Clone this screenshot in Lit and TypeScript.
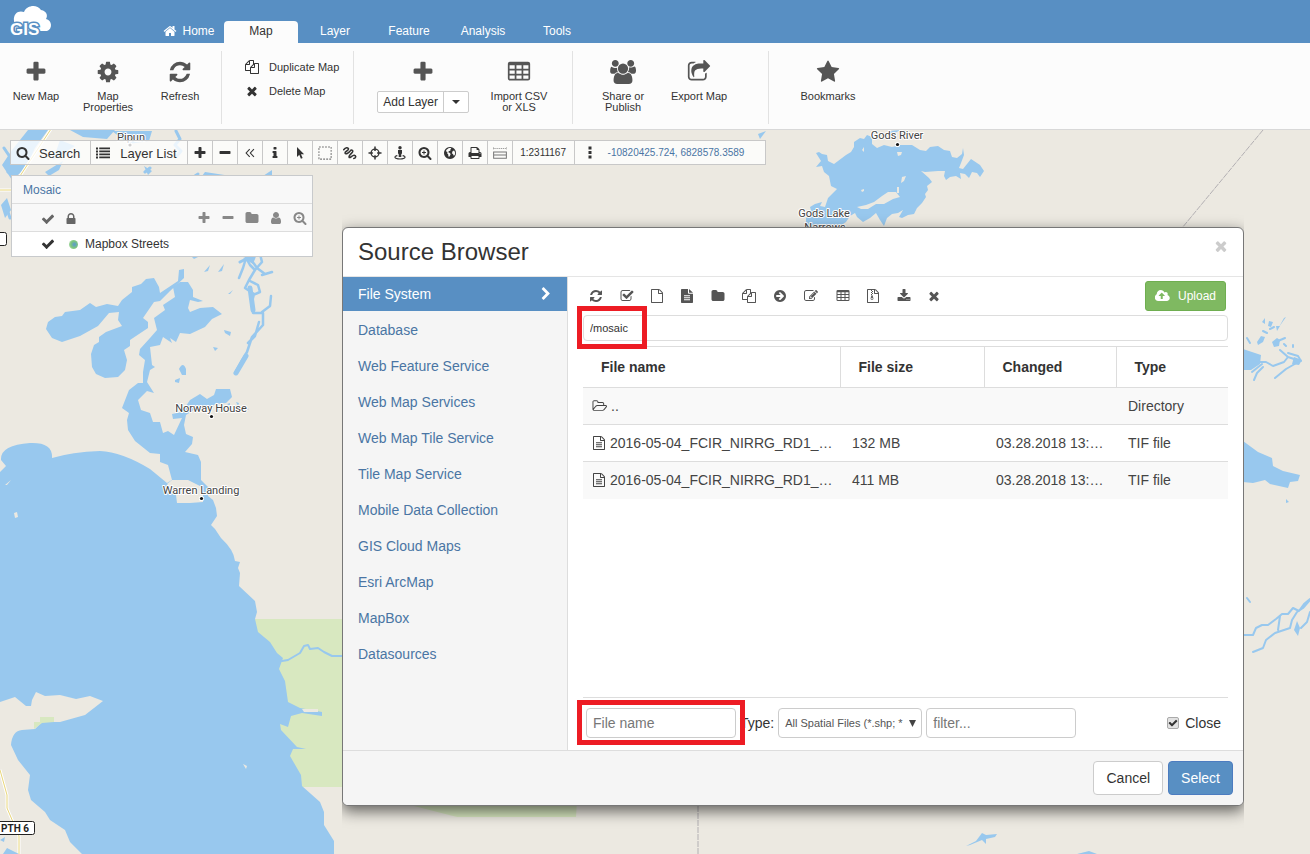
import { LitElement, html, svg, css, nothing } from "lit";
import { customElement, state } from "lit/decorators.js";
import { classMap } from "lit/directives/class-map.js";

const FILE =
  "M1596 380q28 28 48 76t20 88v1152q0 40-28 68t-68 28h-1344q-40 0-68-28t-28-68v-1600q0-40 28-68t68-28h896q40 0 88 20t76 48zm-444-244v376h376q-10-29-22-41l-313-313q-12-12-41-22zm384 1528v-1024h-416q-40 0-68-28t-28-68v-416h-768v1536h1280z";
const MAGNIFIER =
  "M1216 832q0-185-131.5-316.5t-316.5-131.5-316.5 131.5-131.5 316.5 131.5 316.5 316.5 131.5 316.5-131.5 131.5-316.5zm512 832q0 52-38 90t-90 38q-54 0-90-38l-343-342q-179 124-399 124-143 0-273.5-55.5t-225-150-150-225-55.5-273.5 55.5-273.5 150-225 225-150 273.5-55.5 273.5 55.5 225 150 150 225 55.5 273.5q0 220-124 399l343 343q37 37 37 90z";

const PATHS: Record<string, string> = {
  plus: "M1600 736v192q0 40-28 68t-68 28h-416v416q0 40-28 68t-68 28h-192q-40 0-68-28t-28-68v-416h-416q-40 0-68-28t-28-68v-192q0-40 28-68t68-28h416v-416q0-40 28-68t68-28h192q40 0 68 28t28 68v416h416q40 0 68 28t28 68z",
  minus: "M1600 736v192q0 40-28 68t-68 28h-1216q-40 0-68-28t-28-68v-192q0-40 28-68t68-28h1216q40 0 68 28t28 68z",
  cog: "M1152 896q0-106-75-181t-181-75-181 75-75 181 75 181 181 75 181-75 75-181zm512-109v222q0 12-8 23t-20 13l-185 28q-19 54-39 91 35 50 107 138 10 12 10 25t-9 23q-27 37-99 108t-94 71q-12 0-26-9l-138-108q-44 23-91 38-16 136-29 186-7 28-36 28h-222q-14 0-24.5-8.5t-11.5-21.5l-28-184q-49-16-90-37l-141 107q-10 9-25 9-14 0-25-11-126-114-165-168-7-10-7-23 0-12 8-23 15-21 51-66.5t54-70.5q-27-50-41-99l-183-27q-13-2-21-12.5t-8-23.5v-222q0-12 8-23t19-13l186-28q14-46 39-92-40-57-107-138-10-12-10-24 0-10 9-23 26-36 98.5-107.5t94.5-71.5q13 0 26 10l138 107q44-23 91-38 16-136 29-186 7-28 36-28h222q14 0 24.5 8.5t11.5 21.5l28 184q49 16 90 37l142-107q9-9 24-9 13 0 25 10 129 119 165 170 7 8 7 22 0 12-8 23-15 21-51 66.5t-54 70.5q26 50 41 98l183 28q13 2 21 12.5t8 23.5z",
  refresh: "M1639 1056q0 5-1 7-64 268-268 434.5t-478 166.5q-146 0-282.5-55t-243.5-157l-129 129q-19 19-45 19t-45-19-19-45v-448q0-26 19-45t45-19h448q26 0 45 19t19 45-19 45l-137 137q71 66 161 102t187 36q134 0 250-65t186-179q11-17 53-117 8-23 30-23h192q13 0 22.5 9.5t9.5 22.5zm25-800v448q0 26-19 45t-45 19h-448q-26 0-45-19t-19-45 19-45l138-138q-148-137-349-137-134 0-250 65t-186 179q-11 17-53 117-8 23-30 23h-199q-13 0-22.5-9.5t-9.5-22.5v-7q65-268 270-434.5t480-166.5q146 0 284 55.5t245 156.5l130-129q19-19 45-19t45 19 19 45z",
  star: "M1728 647q0 22-26 48l-363 354 86 500q1 7 1 20 0 21-10.5 35.5t-30.5 14.5q-19 0-40-12l-449-236-449 236q-22 12-40 12-21 0-31.5-14.5t-10.5-35.5q0-6 2-20l86-500-364-354q-25-27-25-48 0-37 56-46l502-73 225-455q19-41 49-41t49 41l225 455 502 73q56 9 56 46z",
  search: MAGNIFIER,
  home: "M1472 992v480q0 26-19 45t-45 19h-384v-384h-256v384h-384q-26 0-45-19t-19-45v-480q0-1 .5-3t.5-3l575-474 575 474q1 2 1 6zm223-69l-62 74q-8 9-21 11h-3q-13 0-21-7l-692-577-692 577q-12 8-24 7-13-2-21-11l-62-74q-8-10-7-23.5t11-21.5l719-599q32-26 76-26t76 26l244 204v-195q0-14 9-23t23-9h192q14 0 23 9t9 23v408l219 182q10 8 11 21.5t-7 23.5z",
  times: "M1490 1322q0 40-28 68l-136 136q-28 28-68 28t-68-28l-294-294-294 294q-28 28-68 28t-68-28l-136-136q-28-28-28-68t28-68l294-294-294-294q-28-28-28-68t28-68l136-136q28-28 68-28t68 28l294 294 294-294q28-28 68-28t68 28l136 136q28 28 28 68t-28 68l-294 294 294 294q28 28 28 68z",
  check: "M1671 566q0 40-28 68l-724 724-136 136q-28 28-68 28t-68-28l-136-136-362-362q-28-28-28-68t28-68l136-136q28-28 68-28t68 28l294 295 656-657q28-28 68-28t68 28l136 136q28 28 28 68z",
  chevron: "M1363 877l-742 742q-19 19-45 19t-45-19l-166-166q-19-19-19-45t19-45l531-531-531-531q-19-19-19-45t19-45l166-166q19-19 45-19t45 19l742 742q19 19 19 45t-19 45z",
  folder: "M1728 608v704q0 92-66 158t-158 66h-1216q-92 0-158-66t-66-158v-960q0-92 66-158t158-66h320q92 0 158 66t66 158v32h672q92 0 158 66t66 158z",
  user: "M1536 1399q0 109-62.5 187t-150.5 78h-854q-88 0-150.5-78t-62.5-187q0-85 8.5-160.5t31.5-152 58.5-131 94-89 134.5-34.5q131 128 313 128t313-128q76 0 134.5 34.5t94 89 58.5 131 31.5 152 8.5 160.5zm-256-887q0 159-112.5 271.5t-271.5 112.5-271.5-112.5-112.5-271.5 112.5-271.5 271.5-112.5 271.5 112.5 112.5 271.5z",
  lock: "M640 768h512v-192q0-106-75-181t-181-75-181 75-75 181v192zm832 96v576q0 40-28 68t-68 28h-960q-40 0-68-28t-28-68v-576q0-40 28-68t68-28h32v-192q0-184 132-316t316-132 316 132 132 316v192h32q40 0 68 28t28 68z",
  print: "M448 1536h896v-256h-896v256zm0-640h896v-384h-160q-40 0-68-28t-28-68v-160h-640v640zm1152 64q0-26-19-45t-45-19-45 19-19 45 19 45 45 19 45-19 19-45zm128 0v416q0 13-9.5 22.5t-22.5 9.5h-224v160q0 40-28 68t-68 28h-960q-40 0-68-28t-28-68v-160h-224q-13 0-22.5-9.5t-9.5-22.5v-416q0-79 56.5-135.5t135.5-56.5h64v-544q0-40 28-68t68-28h672q40 0 88 20t76 48l152 152q28 28 48 76t20 88v256h64q79 0 135.5 56.5t56.5 135.5z",
  file: FILE,
  files: "M1696 384q40 0 68 28t28 68v1216q0 40-28 68t-68 28h-960q-40 0-68-28t-28-68v-288h-544q-40 0-68-28t-28-68v-672q0-40 20-88t48-76l408-408q28-28 76-48t88-20h416q40 0 68 28t28 68v328q68-40 128-40h416zm-544 213l-299 299h299v-299zm-640-384l-299 299h299v-299zm196 647l316-316v-416h-384v416q0 40-28 68t-68 28h-416v640h512v-256q0-40 20-88t48-76zm956 804v-1152h-384v416q0 40-28 68t-68 28h-416v640h896z",
  download: "M1344 1344q0-26-19-45t-45-19-45 19-19 45 19 45 45 19 45-19 19-45zm256 0q0-26-19-45t-45-19-45 19-19 45 19 45 45 19 45-19 19-45zm128-224v320q0 40-28 68t-68 28h-1472q-40 0-68-28t-28-68v-320q0-40 28-68t68-28h465l135 136q58 56 136 56t136-56l136-136h464q40 0 68 28t28 68zm-325-569q17 41-14 70l-448 448q-18 19-45 19t-45-19l-448-448q-31-29-14-70 17-39 59-39h256v-448q0-26 19-45t45-19h256q26 0 45 19t19 45v448h256q42 0 59 39z",
  edit: "M888 1184l116-116-152-152-116 116v56h96v96h56zm440-720q-16-16-33 1l-350 350q-17 17-1 33t33-1l350-350q17-17 1-33zm80 594v190q0 119-84.5 203.5t-203.5 84.5h-832q-119 0-203.5-84.5t-84.5-203.5v-832q0-119 84.5-203.5t203.5-84.5h832q63 0 117 25 15 7 18 23 3 17-9 29l-49 49q-14 14-32 8-23-6-45-6h-832q-66 0-113 47t-47 113v832q0 66 47 113t113 47h832q66 0 113-47t47-113v-126q0-13 9-22l64-64q15-15 35-7t20 29zm-96-738l288 288-672 672h-288v-288zm444 132l-92 92-288-288 92-92q28-28 68-28t68 28l152 152q28 28 28 68t-28 68z",
  checksq: "M1472 930v318q0 119-84.5 203.5t-203.5 84.5h-832q-119 0-203.5-84.5t-84.5-203.5v-832q0-119 84.5-203.5t203.5-84.5h832q63 0 117 25 15 7 18 23 3 17-9 29l-49 49q-10 10-23 10-3 0-9-2-23-6-45-6h-832q-66 0-113 47t-47 113v832q0 66 47 113t113 47h832q66 0 113-47t47-113v-254q0-13 9-22l64-64q10-10 23-10 6 0 12 3 20 8 20 29zm231-489l-814 814q-24 24-57 24t-57-24l-430-430q-24-24-24-57t24-57l110-110q24-24 57-24t57 24l263 263 647-647q24-24 57-24t57 24l110 110q24 24 24 57t-24 57z",
  share: "M1472 989v259q0 119-84.5 203.5t-203.5 84.5h-832q-119 0-203.5-84.5t-84.5-203.5v-832q0-119 84.5-203.5t203.5-84.5h255q13 0 22.5 9.5t9.5 22.5q0 27-26 32-77 26-133 60-10 4-16 4h-112q-66 0-113 47t-47 113v832q0 66 47 113t113 47h832q66 0 113-47t47-113v-214q0-19 18-29 28-13 54-37 16-16 35-8 21 9 21 29zm237-496l-384 384q-18 19-45 19-12 0-25-5-39-17-39-59v-192h-160q-323 0-438 131-119 137-74 473 3 23-20 34-8 2-12 2-16 0-26-13-10-14-21-31t-39.5-68.5-49.5-99.5-38.5-114-17.5-122q0-49 3.5-91t14-90 28-88 47-81.5 68.5-74 94.5-61.5 124.5-48.5 159.5-30.5 196.5-11h160v-192q0-42 39-59 13-5 25-5 26 0 45 19l384 384q19 19 19 45t-19 45z",
  info: "M1216 1344v128q0 26-19 45t-45 19h-512q-26 0-45-19t-19-45v-128q0-26 19-45t45-19h64v-384h-64q-26 0-45-19t-19-45v-128q0-26 19-45t45-19h384q26 0 45 19t19 45v576h64q26 0 45 19t19 45zm-128-1152v192q0 26-19 45t-45 19h-256q-26 0-45-19t-19-45v-192q0-26 19-45t45-19h256q26 0 45 19t19 45z",
  folderopen: "M1845 931q0-35-53-35h-1088q-40 0-85.5 21.5t-71.5 52.5l-294 363q-18 24-18 40 0 35 53 35h1088q40 0 86-22t71-53l294-363q18-22 18-39zm-1141-163h768v-160q0-40-28-68t-68-28h-576q-40 0-68-28t-28-68v-64q0-40-28-68t-68-28h-320q-40 0-68 28t-28 68v853l256-315q44-53 116-87.5t140-34.5zm1269 163q0 62-46 120l-295 363q-43 53-116 87.5t-140 34.5h-1088q-92 0-158-66t-66-158v-960q0-92 66-158t158-66h320q92 0 158 66t66 158v32h544q92 0 158 66t66 158v160h192q54 0 99 24.5t67 70.5q15 32 15 68z",
  upload: "M1216 864q0-14-9-23l-352-352q-9-9-23-9t-23 9l-351 351q-10 12-10 24 0 14 9 23t23 9h224v352q0 13 9.5 22.5t22.5 9.5h192q13 0 22.5-9.5t9.5-22.5v-352h224q13 0 22.5-9.5t9.5-22.5zm640 288q0 159-112.5 271.5t-271.5 112.5h-1088q-185 0-316.5-131.5t-131.5-316.5q0-130 70-240t188-165q-2-30-2-43 0-212 150-362t362-150q156 0 285.5 87t188.5 231q71-62 166-62 106 0 181 75t75 181q0 76-41 138 130 31 213.5 135.5t83.5 238.5z",
  users: "M593 896q-162 5-265 128h-134q-82 0-138-40.5t-56-118.5q0-353 124-353 6 0 43.5 21t97.5 42.5 119 21.5q67 0 133-23-5 37-5 66 0 159 93 292zm1071 637q0 120-73 189.5t-194 69.5h-874q-121 0-194-69.5t-73-189.5q0-53 3.5-103.5t14-109 26.5-108.5 43-97.5 62-81 85.5-53.5 111.5-20q10 0 43 21.5t73 48 107 48 135 21.5 135-21.5 107-48 73-48 43-21.5q61 0 111.5 20t85.5 53.5 62 81 43 97.5 26.5 108.5 14 109 3.5 103.5zm-1024-1277q0 106-75 181t-181 75-181-75-75-181 75-181 181-75 181 75 75 181zm704 384q0 159-112.5 271.5t-271.5 112.5-271.5-112.5-112.5-271.5 112.5-271.5 271.5-112.5 271.5 112.5 112.5 271.5zm576 225q0 78-56 118.5t-138 40.5h-134q-103-123-265-128 93-133 93-292 0-29-5-66 66 23 133 23 59 0 119-21.5t97.5-42.5 43.5-21q124 0 124 353zm-128-609q0 106-75 181t-181 75-181-75-75-181 75-181 181-75 181 75 75 181z",
  table: "M224 128h1344q160 0 160 160v1088q0 160-160 160h-1344q-160 0-160-160v-1088q0-160 160-160zM192 400v250h384v-250zM704 400v250h384v-250zM1216 400v250h384v-250zM192 776v250h384v-250zM704 776v250h384v-250zM1216 776v250h384v-250zM192 1152v256h384v-256zM704 1152v256h384v-256zM1216 1152v256h384v-256z",
  filesolid: "M224 0h800v512q0 96 96 96h544v1088q0 96-96 96h-1344q-96 0-96-96v-1600q0-96 96-96zM1152 0l512 480h-512zM512 800v128h768v-128zM512 1056v128h768v-128zM512 1312v128h768v-128z",
  arrowcircle: "M896 128a768 768 0 1 0 .1 0zM848 400l96 0 448 448v96l-448 448h-96l-120-120 248-248h-560v-256h560l-248-248z",
};

const EXTRAS: Record<string, unknown> = {
  searchplus: svg`<path d=${MAGNIFIER} /><path d="M704 576h128v192h192v128h-192v192h-128v-192h-192v-128h192z" />`,
  filetext: svg`<path d=${FILE} /><path d="M512 800h768v112h-768zM512 1056h768v112h-768zM512 1312h768v112h-768z" />`,
  filezip: svg`<path d=${FILE} /><path d="M640 128h128v128h-128zM768 256h128v128h-128zM640 384h128v128h-128zM768 512h128v128h-128zM640 640h128v128h-128zM704 800h128l120 400a184 160 0 1 1-368 0zM768 1130a96 70 0 1 0 .1 0z" fill-rule="evenodd" />`,
  list: svg`<path d="M0 192h256v256h-256zM0 576h256v256h-256zM0 960h256v256h-256zM0 1344h256v256h-256zM416 192h1376v224h-1376zM416 576h1376v224h-1376zM416 960h1376v224h-1376zM416 1344h1376v224h-1376z" />`,
  pointer: svg`<path d="M512 128v1280l290-280 210 500 220-96-210-484h400z" />`,
  marquee: svg`<rect x="120" y="120" width="1560" height="1560" fill="none" stroke="currentColor" stroke-width="130" stroke-dasharray="240 150" />`,
  scribble: svg`<path d="M90 480C330 180 640 150 700 360C760 620 240 640 260 900C290 1160 760 860 900 660C1060 420 1330 520 1220 760C1110 980 700 1200 780 1420C880 1640 1180 1140 1440 1180C1720 1230 1660 1560 1380 1600" fill="none" stroke="currentColor" stroke-width="200" stroke-linecap="round" />`,
  target: svg`<circle cx="896" cy="896" r="500" fill="none" stroke="currentColor" stroke-width="170" /><path d="M800 64h192v560h-192zM800 1168h192v560h-192zM64 800h560v192h-560zM1168 800h560v192h-560z" />`,
  street: svg`<circle cx="896" cy="230" r="220" /><path d="M640 500h512v500h-90v420h-332v-420h-90z" /><path d="M560 1240C100 1300 100 1620 896 1660C1690 1620 1690 1300 1230 1240" fill="none" stroke="currentColor" stroke-width="150" />`,
  globe: svg`<path fill-rule="evenodd" d="M896 128a768 768 0 1 0 .1 0zM760 270l250-10 40 110-130 80 50 110-240 110-60 140 160 60 150 160-90 230-100 130-100-40-20-270-140-140 40-180-200-80 80-200zM1240 640l190-50 130 260-50 300-130 100-90-200-150-120z" />`,
  ruler: svg`<path d="M60 180v280M1730 180v280M60 320h1670" fill="none" stroke="currentColor" stroke-width="90" stroke-dasharray="150 90" /><path d="M80 760h1632v800h-1632zM80 1160h1632" fill="none" stroke="currentColor" stroke-width="130" />`,
  dots: svg`<path d="M704 64h384v384h-384zM704 640h384v384h-384zM704 1216h384v384h-384z" />`,
  collapse: svg`<path d="M860 400L400 896l460 496M1400 400L940 896l460 496" fill="none" stroke="currentColor" stroke-width="140" />`,
};

const WIDE: Record<string, number> = { users: 1920, folderopen: 1973, upload: 1856 };
const CUTOUT = new Set(["table", "filesolid", "arrowcircle"]);

function icon(name: string, size = 14) {
  const vw = WIDE[name] ?? 1792;
  return html`<svg
    width=${Math.round((size * vw) / 1792)}
    height=${size}
    viewBox="0 0 ${vw} 1792"
    fill="currentColor"
    fill-rule=${CUTOUT.has(name) ? "evenodd" : "nonzero"}
    aria-hidden="true"
  >${EXTRAS[name] ?? svg`<path d=${PATHS[name]} />`}</svg>`;
}

const base = css`
  :host {
    box-sizing: border-box;
    font-family: "Liberation Sans", Arial, sans-serif;
    color: #333;
  }
  *, *::before, *::after { box-sizing: border-box; }
  button, input, select { font-family: inherit; color: inherit; margin: 0; }
  button { cursor: pointer; border: 0; background: none; padding: 0; }
  a { text-decoration: none; color: inherit; }
  svg { display: block; flex: none; }
`;

@customElement("app-header")
class AppHeader extends LitElement {
  static styles = [base, css`
    :host { display: block; }
    .bar { display: flex; align-items: flex-end; height: 43px; background: #588fc3; color: #fff; }
    .logo { width: 150px; padding: 3px 0 0 9px; align-self: flex-start; }
    .tab {
      display: flex; align-items: center; justify-content: center; gap: 5px;
      width: 74px; height: 22px; font-size: 12px; line-height: 18px;
      border-radius: 4px 4px 0 0; padding-bottom: 2px;
    }
    .tab.home { padding-left: 4px; }
    .tab.active { background: #fcfcfc; color: #333; }
    .ribbon { display: flex; background: #fcfcfc; border-bottom: 1px solid #d8d8d8; height: 87px; padding: 8px 0 5px; }
    .group { display: flex; border-right: 1px solid #e2e2e2; padding-top: 9px; }
    .group:last-child { border-right: 0; }
    .g1 { padding-right: 5px; }
    .g2 { flex-direction: column; padding: 4px 14px 0 23px; }
    .g3 { padding-left: 23px; padding-right: 17px; gap: 14px; }
    .g4 { padding-left: 14px; padding-right: 33px; gap: 4px; }
    .g5 { padding-left: 23px; }
    .tool {
      display: flex; flex-direction: column; align-items: center; gap: 7px;
      width: 72px; font-size: 11px; line-height: 11px; align-self: flex-start;
    }
    .tool svg, .plus svg { color: #555; }
    .row { display: flex; align-items: center; gap: 10px; height: 24px; font-size: 11px; }
    .rowicon { display: flex; justify-content: center; width: 14px; }
    .add { display: flex; flex-direction: column; align-items: center; gap: 7px; }
    .split { display: flex; border: 1px solid #ccc; border-radius: 2px; background: #fff; height: 22px; }
    .split button { font-size: 12px; padding: 0 5px; }
    .split .drop { border-left: 1px solid #ccc; width: 25px; display: flex; align-items: center; justify-content: center; }
    .mark { font: bold 17px "Liberation Sans", Arial, sans-serif; paint-order: stroke; }
  `];

  private tabs = ["Home", "Map", "Layer", "Feature", "Analysis", "Tools"];

  private tool(name: string, lines: string[]) {
    return html`<button class="tool">${icon(name, 24)}<span>${lines.map((l, i) => html`${i ? html`<br />` : nothing}${l}`)}</span></button>`;
  }

  render() {
    return html`
      <nav class="bar">
        <a class="logo" href="#" aria-label="GIS Cloud">
          <svg width="46" height="36" viewBox="0 0 46 36">
            <path fill="#fff" d="M5 18C4 10 10 7 15 9C18 2 28 1 32 7C38 8 39 13 37 16C43 17 44 26 38 28H6z" />
            <text class="mark" x="1" y="32" fill="#fff" stroke="#588fc3" stroke-width="3">GIS</text>
          </svg>
        </a>
        ${this.tabs.map((t) => html`<a href="#" class=${classMap({ tab: true, home: t === "Home", active: t === "Map" })}>${t === "Home" ? icon("home", 14) : nothing}<span>${t}</span></a>`)}
      </nav>
      <div class="ribbon">
        <div class="group g1">
          ${this.tool("plus", ["New Map"])} ${this.tool("cog", ["Map", "Properties"])} ${this.tool("refresh", ["Refresh"])}
        </div>
        <div class="group g2">
          <button class="row"><span class="rowicon">${icon("files", 14)}</span><span>Duplicate Map</span></button>
          <button class="row"><span class="rowicon">${icon("times", 14)}</span><span>Delete Map</span></button>
        </div>
        <div class="group g3">
          <div class="add">
            <span class="plus">${icon("plus", 24)}</span>
            <div class="split">
              <button>Add Layer</button>
              <button class="drop" aria-label="More layer types"><svg width="8" height="4" viewBox="0 0 8 4"><path d="M0 0h8L4 4z" fill="#333" /></svg></button>
            </div>
          </div>
          ${this.tool("table", ["Import CSV", "or XLS"])}
        </div>
        <div class="group g4">${this.tool("users", ["Share or", "Publish"])} ${this.tool("share", ["Export Map"])}</div>
        <div class="group g5">${this.tool("star", ["Bookmarks"])}</div>
      </div>`;
  }
}

@customElement("map-canvas")
class MapCanvas extends LitElement {
  static styles = [base, css`
    :host { display: block; }
    .map { width: 100%; height: 100%; background: #ece9e1; }
    .water { fill: #98c8ee; }
    .river { fill: none; stroke: #98c8ee; stroke-linejoin: round; stroke-linecap: round; }
    .land { fill: #ece9e1; }
    .park { fill: #d8e8c0; }
    .road { fill: none; stroke: #e8d67a; stroke-width: 1; }
    .case { fill: none; stroke: #fff; stroke-width: 3; }
    .line { fill: none; stroke: #b3b0b3; stroke-width: 1; }
    .place {
      font-family: Roboto, "Noto Sans", sans-serif; font-size: 11px; fill: #444; text-anchor: middle;
      paint-order: stroke; stroke: #fff; stroke-width: 2px; stroke-linejoin: round;
    }
    .shield { font-family: Roboto, sans-serif; font-weight: bold; font-size: 10px; fill: #222; text-anchor: middle; }
  `];

  private label(x: number, y: number, text: string) {
    return svg`<text class="place" x=${x} y=${y}>${text}</text>`;
  }
  private town(x: number, y: number) {
    return svg`<circle cx=${x} cy=${y} r="2.6" fill="#fff" /><circle cx=${x} cy=${y} r="1.6" fill="#111" />`;
  }

  render() {
    return html`<svg class="map" aria-label="Map"><g transform="translate(0 -130)">
      <path class="park" d="M250 619H343V787H295L270 740z" />
      <path class="park" d="M410 805L457 817H576L577 800z" />
      <path class="water" d="M0 472L6 466L1 460Q0 445 30 443Q53 442 52 458Q72 452 100 451Q122 452 150 469L167 483L172 480L168 465L160 462L160 454L150 453L135 441L128 430L127 420L129 413L122 408L129 390L138 383L143 383L143 372L145 360L139 355L140 349L150 338L157 330L154 318L165 310L163 305L175 297L173 287L180 282L188 282L193 290L193 297L203 301L198 302L190 300L188 308L190 312L200 308L213 307L222 314L212 319L205 327L190 334L180 333L176 342L170 338L172 343L163 337L160 345L150 347L152 365L155 367L150 370L147 382L154 393L147 391L138 400L141 410L150 413L153 422L160 422L163 433L168 431L174 435L182 418L173 419L172 414L182 412L190 400L200 394L207 399L214 395L216 389L230 389L232 397L226 403L215 404L210 409L200 406L186 415L184 425L186 434L193 437L192 444L185 452L198 455L201 462L201 480L209 488L208 496L213 500L216 508L217 516L211 525L215 529L221 538Q234 550 235 561L240 562L238 568L240 573L239 586L255 601L257 612L255 619L258 632L270 642L277 653L283 658L279 669L285 681L288 702L300 708L322 712V716L302 713L291 716L288 727L280 724L281 730L297 747L306 749L293 749L290 756L301 775L302 786L320 802L324 812L324 825L334 841V854H82L70 842L65 830L50 820L45 812L31 800L28 790L30 775L18 760L11 745Q12 731 22 730L35 729L42 722L60 722L85 715L103 701L90 696L76 699L60 695L45 696L36 692L32 700L31 706L26 706L15 697L0 702z" />
      <path class="land" d="M172 480L188 480L200 486L203 490V502L190 503L177 503L176 495L167 484zM5 485l6-5-4 5zM14 513l3-1 1 5-3 1zM243 764l4 2-1 3zM302 709h16v3h-14z" />
      <path class="park" d="M34 729V722H40V717H54V722L42 723z" />
      <path class="water" d="M46 329L48 322L55 317L62 316L65 312L80 310L90 303L96 307L107 304L118 306L122 300L132 292V287L141 284L146 279L154 278L159 287L160 293L178 281L179 270L184 269L184 278L170 291L160 301L154 302L143 318L148 322L148 328L130 340V346L124 350L127 360L125 370L118 377L105 378L96 374L92 367L91 354L94 345L99 342V337L106 332L122 326L118 320L119 312L109 313L98 326L80 336L62 342L52 338z" />
      <path class="water" d="M179 369q4-8 7 0v6h-4zM175 380l5-2-1 5-4-1zM224 330l7 2-1 4-5-3zM213 347l5 1-3 3zM228 294l5-4-3 4zM204 272l6-7-2 6zM218 272l6-8-2 7zM227 404l3-1v3zM236 402l3 1-1 3zM245 408l4 1-3 2z" />
      <path class="river" stroke-width="2.5" d="M246 258L243 268L239 278M246 258L250 265L255 270L249 280L245 288L254 294L252 302L253 313H263V325L252 337L247 352L241 362L235 373M255 270L262 262L259 250M262 275L272 272M250 258l7 10 8 6M262 312l8-6 1-10M250 281l8 4 2 7-7 3M259 322l-4 14-7 7" />
      <path class="river" stroke-width="5" d="M250 288l3 22M246 356l-10 17" />
      <path class="water" d="M12 150L28 130H48L35 148L26 168L12 180L2 165zM70 130h45l-8 9-24-2zM60 140l15 6-22 14zM112 131l40 0-3 10-20 3zM45 172l18-11-4 9-10 6zM144 166l8 5-4 4zM205 172l26 4h32l9-6v6h-70zM1 205l6-7 4 12-6 8zM190 255h12l-8 4zM243 258l14-4-4 10z" />
      <path class="river" stroke-width="3" d="M176 131l4 8-5 6 6 6-4 5M4 148l8 12-4 12M150 168l-5 4M192 178l6-4M8 212l2 6M240 262l12-6" />
      <path class="case" d="M51 129L20 176M0 190H12" /><path class="road" d="M51 129L20 176M0 190H12" />
      <path class="case" d="M0 770L7 795V808L19 836V854" /><path class="road" d="M0 770L7 795V808L19 836V854" />
      <path class="water" d="M0 840l5-3-1 5zM3 854l4-6 12 6zM184 854l1-4zM186 723h3v1h-3z" />
      <path class="river" stroke-width="2" d="M282 661L288 660L300 653L304 646L308 645L310 649L318 648L324 652L332 656H343" />
      <path class="water" d="M816 153L819 152L822 154L827 155L828 161L834 164L842 158L846 155L851 152L854 147V142L860 138L864 139L867 135L872 137V144L877 148L884 145L892 147L900 145L912 145L920 150L926 151L930 147L938 146L944 150L950 151L952 157L957 158L962 154L963 148L964 155L961 163L959 168L963 169L967 164L971 159L977 163L980 165L984 171L980 177L977 173L972 172L969 178L965 174L960 173L961 179L956 176L950 177L946 180L944 176L945 171L938 171L925 172L921 171L929 178L932 182L927 186L928 190L925 194L926 197L922 203L917 208L914 214L908 215L902 218L899 217L903 210L898 213L892 214L887 218L884 226L880 220L876 213L870 218L863 222L857 217L855 213L850 216L846 222L840 226H812L806 224V218L812 214L810 207L815 204L822 202L820 206L825 207L828 198L837 189L831 186L829 176L824 172L822 166L816 167L821 161z" />
      <path class="land" d="M857 207L866 205L874 202L882 196L888 192L896 192L900 197L893 199L884 204L876 204L868 209L861 209zM861 190l3-1 0 2-2 1zM902 177l4-1-2 5-3 2zM897 187l2 0 0 6-2 0zM897 152l5 0-1 3-3 1zM862 150l2-3 0 5zM872 137l3 5-2 1z" />
      <path class="water" d="M890 131l10-1-8 5zM758 134l8-3-3 4-3 4zM662 130h6z" />
      <path class="line" stroke-dasharray="6 1" d="M1263 130L1182 228M698 806V854" />
      <path class="water" d="M1243 349l18 6-1 9-9 6-8 0zM1243 441l15 11 14 6 1 8 10 5 17 4-2 6-8 1-2 6-18-4-5-4-12 3-10-1zM1272 342l5-4 3 2-1 6-5 1zM1257 342l4-6 4 1-2 5-5 3zM1262 322l3-4v6zM1269 321l4 1-2 5-3-1zM1284 318l2-1-7 10zM1276 326l4 0-3 5zM1286 499l3 3-3 1zM1294 630l3-9 3 7-2 8z" />
      <path class="river" stroke-width="2" d="M1278 341l7-3M1263 331l4 2M1252 362L1266 362L1273 366L1284 362L1288 357L1280 350M1288 357L1300 361L1286 369L1275 378M1288 353l10 3 3 5M1252 372l10-8M1254 380l3-7 6-6M1250 343l-3-5M1270 329l4-2M1286 346l-2-2M1293 347v-2" />
      <path class="water" d="M1294 357l8 3-3 5-7-1z" />
      <path class="river" stroke-width="2" d="M1243 635H1253L1256 628L1262 625H1268L1276 619L1282 614H1288L1293 608L1299 611L1304 604L1310 599M1253 652L1263 648L1266 640L1275 633L1290 628L1292 620L1297 612L1303 608L1310 600M1280 616l-2 14M1310 612l-3 10-6 6M1247 598l3 4" />
      <path class="water" d="M966 846l10-5 6-8 4 2 11-1-2 3-9 2v5l-4-4-12 5zM1077 854l12-3 8 3z" />
      ${this.town(897.5, 144.5)}${this.town(211.5, 416.5)}${this.town(201.5, 498.5)}${this.town(130, 145)}
      ${this.label(131, 141, "Pipun")}${this.label(897, 139, "Gods River")}${this.label(824, 217, "Gods Lake")}${this.label(825, 231, "Narrows")}
      ${this.label(211, 412, "Norway House")}${this.label(201, 494, "Warren Landing")}
      <rect x="-4" y="821.5" width="38.5" height="13" rx="2" fill="#fff" stroke="#222" />
      <text class="shield" x="15" y="832">PTH 6</text>
      <rect x="-6" y="232.5" width="12.5" height="13" rx="2" fill="#fff" stroke="#222" />
    </g></svg>`;
  }
}

@customElement("map-tools")
class MapTools extends LitElement {
  static styles = [base, css`
    :host { display: flex; height: 25px; border: 1px solid #c8c8c8; border-left: 0; background: rgba(255, 255, 255, 0.8); }
    .cell {
      display: flex; align-items: center; justify-content: center; width: 25px;
      border-left: 1px solid #c8c8c8; color: #333;
    }
    .wide { width: auto; font-size: 13px; gap: 9px; padding: 1px 10px 0 5px; }
    .list { gap: 10px; }
    .dim { color: #777; }
    .scale { width: 62px; font-size: 10px; }
    .coords { width: 191px; font-size: 10px; justify-content: flex-start; gap: 11px; padding-left: 8px; }
    .point { color: #4a75a4; }
  `];
  private tools = [
    ["plus", "Zoom in"], ["minus", "Zoom out"], ["collapse", "Previous view"], ["info", "Info"], ["pointer", "Select"],
    ["marquee", "Area select"], ["scribble", "Freehand select"], ["target", "Locate"], ["street", "Street view"],
    ["searchplus", "Zoom to area"], ["globe", "Full extent"], ["print", "Print"], ["ruler", "Measure"],
  ];
  render() {
    return html`
      <button class="cell wide">${icon("search", 14)}<span>Search</span></button>
      <button class="cell wide list">${icon("list", 14)}<span>Layer List</span></button>
      ${this.tools.map(([n, l]) => html`<button class=${classMap({ cell: true, dim: n === "ruler" || n === "marquee" })} aria-label=${l}>${icon(n, 14)}</button>`)}
      <div class="cell scale">1:2311167</div>
      <div class="cell coords">${icon("dots", 14)}<span class="point">-10820425.724, 6828578.3589</span></div>`;
  }
}

@customElement("layer-panel")
class LayerPanel extends LitElement {
  static styles = [base, css`
    :host { display: block; width: 302px; border: 1px solid #c8cacc; background: #fff; font-size: 12px; }
    .title { display: flex; align-items: center; height: 28px; padding-left: 11px; color: #4a75a4; background: #f8f8f8; border-bottom: 1px solid #ddd; }
    .bar { display: flex; align-items: center; height: 28px; padding: 0 5px 0 29px; background: #f8f8f8; border-bottom: 1px solid #ddd; color: #888; }
    .marks { display: flex; gap: 9px; color: #666; padding-top: 2px; }
    .actions { display: flex; gap: 10px; margin-left: auto; }
    .layer { display: flex; align-items: center; height: 24px; padding-left: 29px; }
    .dot { width: 9px; height: 9px; margin: 0 7px 0 14px; border-radius: 50%; background: radial-gradient(circle at 60% 50%, #5f9fc4 10%, #7cc57c 50%, #c4e6c0); }
  `];
  render() {
    return html`
      <div class="title">Mosaic</div>
      <div class="bar">
        <div class="marks">${icon("check", 14)}${icon("lock", 14)}</div>
        <div class="actions">
          ${[["plus", "Add"], ["minus", "Remove"], ["folder", "Folder"], ["user", "Permissions"], ["searchplus", "Zoom to layer"]].map(
            ([n, l]) => html`<button aria-label=${l}>${icon(n, 14)}</button>`
          )}
        </div>
      </div>
      <div class="layer">${icon("check", 14)}<span class="dot"></span><span>Mapbox Streets</span></div>`;
  }
}

@customElement("source-browser")
class SourceBrowser extends LitElement {
  static styles = [base, css`
    :host {
      display: block; background: #fff; border: 1px solid #777; border-radius: 6px;
      box-shadow: 0 5px 15px rgba(0, 0, 0, 0.6); clip-path: inset(-40px 0 -40px 0); font-size: 14px;
    }
    .head { display: flex; justify-content: space-between; height: 49px; padding: 0 14px 0 15px; border-bottom: 1px solid #e5e5e5; }
    h2 { margin: 0; font-size: 24px; font-weight: 400; line-height: 48px; }
    .x { height: 36px; color: #ccc; }
    .body { display: flex; min-height: 474px; border-bottom: 1px solid #ddd; }
    .side { display: flex; flex-direction: column; gap: 2px; width: 225px; flex: none; background: #f5f5f5; border-right: 1px solid #ddd; }
    .source { display: flex; align-items: center; justify-content: space-between; height: 34px; padding: 0 14px 0 15px; color: #4a75a4; }
    .source.active { background: #588fc3; color: #fff; }
    .main { display: flex; flex-direction: column; flex: 1; min-width: 0; padding: 4px 15px 0; }
    .tools { display: flex; align-items: center; gap: 18px; height: 30px; padding: 0 2px 0 7px; color: #555; }
    .tools .t { display: flex; justify-content: center; }
    .upload {
      display: flex; align-items: center; gap: 8px; height: 30px; margin-left: auto; padding: 0 9px;
      color: #fff; font-size: 12px; background: #7fb961; border: 1px solid #6fae50; border-radius: 3px;
    }
    .path { position: relative; margin: 4px 0 5px; }
    .path input {
      display: block; width: 100%; height: 26px; padding: 0 6px; border: 1px solid #ddd; border-radius: 4px;
      font-size: 11px; background: #fff;
    }
    .callout { position: absolute; border: 5px solid #ed1c24; pointer-events: none; }
    .path .callout { left: -6px; top: -9px; width: 70px; height: 43px; }
    .name .callout { left: -9px; top: -8px; width: 168px; height: 45px; }
    table { width: 100%; border-collapse: collapse; table-layout: fixed; }
    .size { width: 144px; }
    .date { width: 132px; }
    .type { width: 112px; }
    th { height: 41px; padding: 0 18px; text-align: left; border-top: 1px solid #ddd; border-left: 1px solid #ddd; border-bottom: 1px solid #ddd; }
    th:first-child { border-left: 0; }
    td { height: 37px; padding: 0 9px 0 12px; border-top: 1px solid #ddd; overflow: hidden; white-space: nowrap; text-overflow: ellipsis; color: #444; }
    td:first-child { padding-left: 9px; }
    tbody tr:nth-child(odd) { background: #f9f9f9; }
    .entry { display: flex; align-items: center; gap: 4px; }
    .filters { display: flex; align-items: center; gap: 4px; height: 53px; margin-top: auto; padding: 0 7px 2px 3px; border-top: 1px solid #ddd; }
    .name { position: relative; }
    .box { display: block; width: 150px; height: 30px; padding: 0 6px; font-size: 14px; border: 1px solid #ccc; border-radius: 4px; background: #fff; }
    .box::placeholder { color: #777; opacity: 1; }
    .pick { display: grid; align-items: center; }
    .pick select {
      grid-area: 1 / 1; width: 144px; height: 30px; padding: 0 18px 0 6px; font-size: 11px; color: #555;
      appearance: none; border: 1px solid #ccc; border-radius: 4px; background: #fff;
    }
    .pick svg { grid-area: 1 / 1; justify-self: end; margin-right: 6px; pointer-events: none; }
    .close { display: flex; align-items: center; gap: 6px; margin-left: auto; }
    .tick { display: grid; place-items: center; }
    .tick input { grid-area: 1 / 1; width: 12px; height: 12px; appearance: none; border: 1px solid #aaa; border-radius: 2px; background: #e2e2e2; }
    .tick svg { grid-area: 1 / 1; pointer-events: none; }
    .foot { display: flex; justify-content: flex-end; gap: 5px; padding: 10px; background: #f5f5f5; border-radius: 0 0 5px 5px; }
    .btn { height: 34px; padding: 0 12px; font-size: 14px; border: 1px solid #ccc; border-radius: 4px; background: #fff; }
    .btn.primary { color: #fff; background: #588fc3; border-color: #4c7cc0; }
  `];

  @state() private current = "File System";
  private sources = [
    "File System", "Database", "Web Feature Service", "Web Map Services", "Web Map Tile Service", "Tile Map Service",
    "Mobile Data Collection", "GIS Cloud Maps", "Esri ArcMap", "MapBox", "Datasources",
  ];
  private actions: [string, number, string][] = [
    ["refresh", 12, "Refresh"], ["checksq", 13, "Select all"], ["file", 12, "New file"], ["filesolid", 12, "New document"],
    ["folder", 13, "New folder"], ["files", 14, "Copy"], ["arrowcircle", 12, "Move"], ["edit", 14, "Rename"],
    ["table", 13, "Table"], ["filezip", 12, "Archive"], ["download", 13, "Download"], ["times", 11, "Delete"],
  ];
  private rows = [
    ["folderopen", "..", "", "", "Directory"],
    ["filetext", "2016-05-04_FCIR_NIRRG_RD1_…", "132 MB", "03.28.2018 13:…", "TIF file"],
    ["filetext", "2016-05-04_FCIR_NIRRG_RD1_…", "411 MB", "03.28.2018 13:…", "TIF file"],
  ];

  render() {
    return html`
      <div class="head"><h2>Source Browser</h2><button class="x" aria-label="Close dialog">${icon("times", 16)}</button></div>
      <div class="body">
        <nav class="side">
          ${this.sources.map((s) => html`<a href="#" class=${classMap({ source: true, active: s === this.current })}
            @click=${(e: Event) => { e.preventDefault(); this.current = s; }}><span>${s}</span>${s === this.current ? icon("chevron", 14) : nothing}</a>`)}
        </nav>
        <div class="main">
          <div class="tools">
            ${this.actions.map(([n, w, l]) => html`<button class="t" style="width:${w}px" aria-label=${l}>${icon(n, 14)}</button>`)}
            <button class="upload">${icon("upload", 14)}<span>Upload</span></button>
          </div>
          <div class="path"><input type="text" aria-label="Path" .value=${"/mosaic"} /><span class="callout"></span></div>
          <table>
            <colgroup><col /><col class="size" /><col class="date" /><col class="type" /></colgroup>
            <thead><tr><th>File name</th><th>File size</th><th>Changed</th><th>Type</th></tr></thead>
            <tbody>
              ${this.rows.map(([i, name, size, date, type]) => html`<tr>
                <td><div class="entry">${icon(i, 14)}<span>${name}</span></div></td><td>${size}</td><td>${date}</td><td>${type}</td></tr>`)}
            </tbody>
          </table>
          <div class="filters">
            <div class="name"><input class="box" type="text" placeholder="File name" aria-label="File name" /><span class="callout"></span></div>
            <label for="kind">Type:</label>
            <div class="pick">
              <select id="kind"><option>All Spatial Files (*.shp; *</option></select>
              <svg width="7" height="7" viewBox="0 0 7 7"><path d="M0 0h7L3.5 7z" fill="#444" /></svg>
            </div>
            <input class="box" type="text" placeholder="filter..." aria-label="Filter" />
            <label class="close"><span class="tick"><input type="checkbox" checked />${icon("check", 10)}</span><span>Close</span></label>
          </div>
        </div>
      </div>
      <div class="foot"><button class="btn">Cancel</button><button class="btn primary">Select</button></div>`;
  }
}

@customElement("app-root")
class AppRoot extends LitElement {
  static styles = [base, css`
    :host { display: flex; flex-direction: column; min-height: 100vh; }
    .stage { position: relative; flex: 1; display: grid; overflow: hidden; }
    .tools { position: absolute; left: 10px; top: 10px; }
    .layers { position: absolute; left: 11px; top: 45px; }
    .dialog { position: absolute; left: 342px; right: 66px; top: 97px; }
  `];
  render() {
    return html`
      <app-header></app-header>
      <main class="stage">
        <map-canvas></map-canvas>
        <map-tools class="tools"></map-tools>
        <layer-panel class="layers"></layer-panel>
        <source-browser class="dialog"></source-browser>
      </main>`;
  }
}
